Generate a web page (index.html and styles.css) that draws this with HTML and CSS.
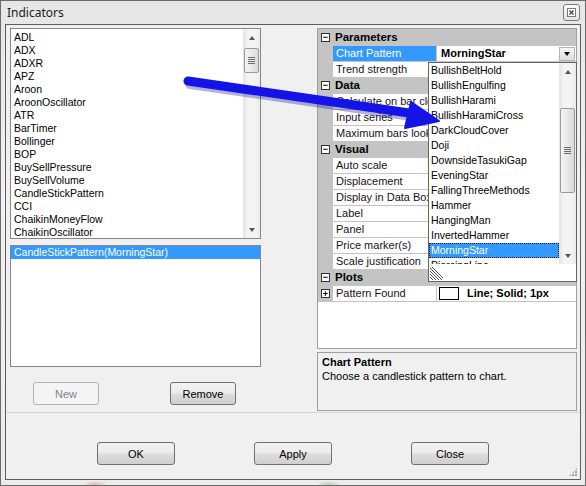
FILE: index.html
```html
<!DOCTYPE html>
<html>
<head>
  <title>Indicators</title>
  <link rel="stylesheet" href="styles.css">
</head>
<body>
<div class="window">
  <div class="titlebar">
    <span class="title">Indicators</span>
    <span class="close-btn">
      <svg width="9" height="9" viewBox="0 0 9 9">
        <rect x="0.5" y="0.5" width="8" height="8" fill="#fff" stroke="#7a7a7a"/>
        <path d="M2.5 2.5 L6.5 6.5 M6.5 2.5 L2.5 6.5" stroke="#3c3c3c" stroke-width="1.2"/>
      </svg>
    </span>
  </div>

  <div class="client">
    <div class="panes">
      <div class="left-pane">
        <div class="listbox available">
          <ul class="items">
            <li>ADL</li>
            <li>ADX</li>
            <li>ADXR</li>
            <li>APZ</li>
            <li>Aroon</li>
            <li>AroonOscillator</li>
            <li>ATR</li>
            <li>BarTimer</li>
            <li>Bollinger</li>
            <li>BOP</li>
            <li>BuySellPressure</li>
            <li>BuySellVolume</li>
            <li>CandleStickPattern</li>
            <li>CCI</li>
            <li>ChaikinMoneyFlow</li>
            <li>ChaikinOscillator</li>
          </ul>
          <div class="vscroll">
            <div class="sb-btn"><span class="tri-up"></span></div>
            <div class="sb-track">
              <div class="sb-thumb short"><span class="grip"></span></div>
            </div>
            <div class="sb-btn"><span class="tri-down"></span></div>
          </div>
        </div>

        <div class="listbox applied">
          <ul class="items">
            <li class="selected">CandleStickPattern(MorningStar)</li>
          </ul>
        </div>

        <div class="pane-buttons">
          <button class="btn new" disabled>New</button>
          <button class="btn remove">Remove</button>
        </div>
      </div>

      <div class="right-pane">
        <div class="propgrid">
          <div class="row category"><span class="margin"><span class="expander">&minus;</span></span><span class="cat-name">Parameters</span></div>
          <div class="row"><span class="margin"></span><span class="name selected">Chart Pattern</span><span class="value bold">MorningStar<span class="drop-btn"><span class="tri-down black"></span></span></span></div>
          <div class="row"><span class="margin"></span><span class="name">Trend strength</span><span class="value"></span></div>
          <div class="row category"><span class="margin"><span class="expander">&minus;</span></span><span class="cat-name">Data</span></div>
          <div class="row"><span class="margin"></span><span class="name">Calculate on bar close</span><span class="value"></span></div>
          <div class="row"><span class="margin"></span><span class="name">Input series</span><span class="value"></span></div>
          <div class="row"><span class="margin"></span><span class="name">Maximum bars look back</span><span class="value"></span></div>
          <div class="row category"><span class="margin"><span class="expander">&minus;</span></span><span class="cat-name">Visual</span></div>
          <div class="row"><span class="margin"></span><span class="name">Auto scale</span><span class="value"></span></div>
          <div class="row"><span class="margin"></span><span class="name">Displacement</span><span class="value"></span></div>
          <div class="row"><span class="margin"></span><span class="name">Display in Data Box</span><span class="value"></span></div>
          <div class="row"><span class="margin"></span><span class="name">Label</span><span class="value"></span></div>
          <div class="row"><span class="margin"></span><span class="name">Panel</span><span class="value"></span></div>
          <div class="row"><span class="margin"></span><span class="name">Price marker(s)</span><span class="value"></span></div>
          <div class="row"><span class="margin"></span><span class="name">Scale justification</span><span class="value"></span></div>
          <div class="row category"><span class="margin"><span class="expander">&minus;</span></span><span class="cat-name">Plots</span></div>
          <div class="row"><span class="margin"><span class="expander plus">+</span></span><span class="name">Pattern Found</span><span class="value bold"><span class="swatch"></span>Line; Solid; 1px</span></div>
        </div>
        <div class="help-box">
          <div class="help-title">Chart Pattern</div>
          <div>Choose a candlestick pattern to chart.</div>
        </div>
      </div>
    </div>

    <div class="dialog-buttons">
      <button class="btn wide">OK</button>
      <button class="btn wide">Apply</button>
      <button class="btn wide">Close</button>
    </div>
    <span class="size-grip"></span>
  </div>

  <!-- open drop-down of the Chart Pattern editor -->
  <div class="dropdown">
    <div class="dd-body">
      <ul class="dd-items">
        <li>BullishBeltHold</li>
        <li>BullishEngulfing</li>
        <li>BullishHarami</li>
        <li>BullishHaramiCross</li>
        <li>DarkCloudCover</li>
        <li>Doji</li>
        <li>DownsideTasukiGap</li>
        <li>EveningStar</li>
        <li>FallingThreeMethods</li>
        <li>Hammer</li>
        <li>HangingMan</li>
        <li>InvertedHammer</li>
        <li class="selected">MorningStar</li>
        <li>PiercingLine</li>
      </ul>
      <div class="vscroll">
        <div class="sb-btn"><span class="tri-up"></span></div>
        <div class="sb-track">
          <div class="sb-thumb long"><span class="grip"></span></div>
        </div>
        <div class="sb-btn"><span class="tri-down"></span></div>
      </div>
    </div>
    <div class="dd-grip">
      <svg width="13" height="13" viewBox="0 0 13 13">
        <path d="M0 1 L12 13 M0 4 L9 13 M0 7 L6 13 M0 10 L3 13 M2 0 L13 11" stroke="#555" stroke-width="1"/>
      </svg>
    </div>
  </div>

  <svg class="callout" width="586" height="486" viewBox="0 0 586 486">
    <line x1="190" y1="84" x2="418" y2="117" stroke="#00008a" stroke-opacity="0.3" stroke-width="10" stroke-linecap="round"/>
    <line x1="188" y1="81" x2="416" y2="114" stroke="#1414e8" stroke-width="9" stroke-linecap="round"/>
    <polygon points="439,121 411,102 405,128" fill="#1414e8" stroke="#1414e8" stroke-width="2" stroke-linejoin="round"/>
  </svg>
</div>
</body>
</html>
```

FILE: styles.css
```css
body {
  margin: 0;
  font-family: "Liberation Sans", Arial, sans-serif;
  font-size: 11px;
  color: #000;
}

.window {
  position: relative;
  width: 586px;
  height: 486px;
  box-sizing: border-box;
  border: 1px solid #6c6c6c;
  background:
    radial-gradient(ellipse 12px 3px at 94px 483px, rgba(190,70,70,0.3), transparent),
    radial-gradient(ellipse 12px 3px at 328px 483px, rgba(80,140,80,0.3), transparent),
    linear-gradient(#e6e6e6, #f1f1f1 40%, #ececec);
  overflow: hidden;
}

.titlebar {
  height: 23px;
  display: flex;
  align-items: center;
  justify-content: space-between;
  padding: 0 5px 0 6px;
}

.title {
  font-family: "Noto Sans", "Open Sans", sans-serif;
  font-size: 12px;
  color: #1a1a1a;
}

.close-btn {
  width: 15px;
  height: 15px;
  border: 1px solid #7c7c7c;
  border-radius: 3px;
  background: linear-gradient(#fbfbfb, #e4e4e4);
  display: flex;
  align-items: center;
  justify-content: center;
}

.client {
  position: relative;
  margin: 0 4px;
  height: 456px;
  box-sizing: border-box;
  border: 1px solid #5e5e5e;
  background: #f0f0f0;
}

.panes {
  height: 388px;
  box-sizing: border-box;
  border-bottom: 1px solid #d5d5d5;
  display: flex;
}

/* left column: indicator lists */
.left-pane {
  padding: 3px 0 0 4px;
  width: 251px;
  display: flex;
  flex-direction: column;
}

.listbox {
  display: flex;
  box-sizing: border-box;
  border: 1px solid #828790;
  background: #fff;
  overflow: hidden;
}

.available { height: 211px; }
.applied { height: 122px; margin-top: 6px; }

.items {
  flex: 1;
  list-style: none;
  margin: 0;
  padding: 2px 0 0 0;
  font-size: 10.5px;
}

.items li {
  height: 13px;
  line-height: 13px;
  padding-left: 3px;
  white-space: nowrap;
}

.applied .items { padding-top: 0; }

.items li.selected,
.dd-items li.selected {
  background: #3399ff;
  color: #fff;
}

/* scrollbars */
.vscroll {
  width: 17px;
  display: flex;
  flex-direction: column;
  background: linear-gradient(90deg, #e4e4e4, #f4f4f4 30%, #f4f4f4 70%, #ebebeb);
}

.sb-btn {
  height: 17px;
  flex: none;
  display: flex;
  align-items: center;
  justify-content: center;
}

.sb-track { flex: 1; }

.sb-thumb {
  margin: 0 1px;
  box-sizing: border-box;
  border: 1px solid #999;
  border-radius: 2px;
  background: linear-gradient(90deg, #f4f4f4, #e8e8e8 50%, #d9d9d9);
  display: flex;
  align-items: center;
  justify-content: center;
}

.sb-thumb.short { margin-top: 2px; height: 25px; }
.sb-thumb.long { margin-top: 28px; height: 85px; }

.grip {
  width: 7px;
  height: 7px;
  background: repeating-linear-gradient(#6b6b6b 0 1px, transparent 1px 2px);
}

.tri-up,
.tri-down {
  width: 0;
  height: 0;
  border-left: 3.5px solid transparent;
  border-right: 3.5px solid transparent;
}

.tri-up { border-bottom: 4px solid #555; }
.tri-down { border-top: 4px solid #555; }
.tri-down.black { border-top-color: #000; }

.pane-buttons {
  margin-top: 15px;
  display: flex;
}

.btn {
  height: 23px;
  box-sizing: border-box;
  border: 1px solid #707070;
  border-radius: 3px;
  background: linear-gradient(#f2f2f2, #ebebeb 49%, #dddddd 51%, #cfcfcf);
  font-family: "Liberation Sans", Arial, sans-serif;
  font-size: 11px;
  color: #000;
  padding: 0;
}

.btn.new {
  width: 66px;
  margin-left: 23px;
  border-color: #adb2b5;
  background: #f4f4f4;
  color: #838383;
}

.btn.remove {
  width: 66px;
  margin-left: 71px;
}

/* right column: property grid */
.right-pane {
  margin-left: 56px;
  width: 260px;
  padding-top: 3px;
  display: flex;
  flex-direction: column;
}

.propgrid {
  height: 321px;
  box-sizing: border-box;
  border: 1px solid #a0a0a0;
  background: #fff;
  padding-top: 1px;
  background-image: linear-gradient(#c4c4c4, #c4c4c4);
  background-size: 100% 1px;
  background-repeat: no-repeat;
}

.row {
  display: flex;
  height: 16px;
  box-sizing: border-box;
  border-bottom: 1px solid #c4c4c4;
  line-height: 15px;
  white-space: nowrap;
}

.row.category { background: #c4c4c4; }

.margin {
  width: 15px;
  flex: none;
  background: #c4c4c4;
  display: flex;
  align-items: center;
  padding-left: 3px;
  box-sizing: border-box;
}

.expander {
  width: 9px;
  height: 9px;
  box-sizing: border-box;
  border: 1px solid #333;
  background: #fff;
  font-size: 9px;
  line-height: 6px;
  text-align: center;
  font-weight: bold;
}

.expander.plus { line-height: 8px; }

.cat-name {
  padding-left: 2px;
  font-weight: bold;
  font-size: 11.5px;
}

.name {
  width: 104px;
  flex: none;
  padding-left: 3px;
  box-sizing: border-box;
  border-right: 1px solid #c4c4c4;
  overflow: hidden;
  color: #1a0f1a;
}

.name.selected {
  background: #3399ff;
  color: #fff;
}

.value {
  flex: 1;
  display: flex;
  align-items: center;
  padding-left: 4px;
}

.bold { font-weight: bold; }

.drop-btn {
  margin-left: auto;
  margin-right: 1px;
  width: 16px;
  height: 14px;
  box-sizing: border-box;
  border: 1px solid #b5b5b5;
  background: linear-gradient(#f6f6f6, #dcdcdc);
  display: flex;
  align-items: center;
  justify-content: center;
}

.swatch {
  width: 20px;
  height: 13px;
  box-sizing: border-box;
  border: 1px solid #000;
  background: #fff;
  margin: 0 8px 0 -2px;
}

.help-box {
  margin-top: 3px;
  height: 59px;
  box-sizing: border-box;
  border: 1px solid #a0a0a0;
  padding: 2px 4px;
  line-height: 14px;
}

.help-title { font-weight: bold; }

.dialog-buttons {
  display: flex;
  gap: 79px;
  padding: 29px 0 0 91px;
}

.btn.wide { width: 78px; }

.size-grip {
  position: absolute;
  right: 3px;
  bottom: 3px;
  width: 8px;
  height: 8px;
  background:
    radial-gradient(circle at 1px 1px, #a0a0a0 0.8px, transparent 1px) 0 0 / 3px 3px;
  clip-path: polygon(100% 0, 100% 100%, 0 100%);
}

/* open drop-down list */
.dropdown {
  position: absolute;
  left: 427px;
  top: 61px;
  width: 149px;
  height: 220px;
  box-sizing: border-box;
  border: 1px solid #646464;
  background: #fff;
  display: flex;
  flex-direction: column;
}

.dd-body {
  height: 201px;
  flex: none;
  display: flex;
}

.dd-items {
  flex: 1;
  list-style: none;
  margin: 0;
  padding: 0;
  overflow: hidden;
  font-size: 10.5px;
}

.dd-items li {
  height: 15px;
  line-height: 15px;
  padding-left: 2px;
  white-space: nowrap;
}

.dd-items li.selected {
  outline: 1px dotted #222;
  outline-offset: -1px;
}

.dd-grip {
  flex: 1;
  padding: 3px 0 0 1px;
}

.callout {
  position: absolute;
  left: -1px;
  top: -1px;
  pointer-events: none;
}
```
